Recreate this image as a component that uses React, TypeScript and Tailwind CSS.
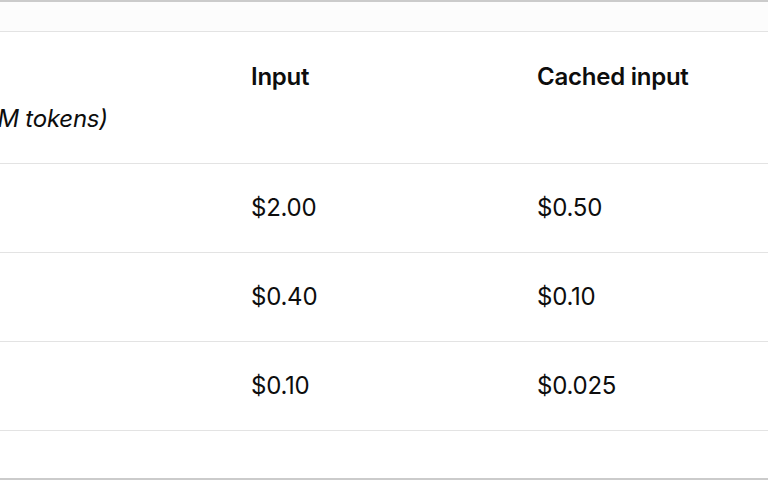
export default function App() {
  const rows = [
    { input: "$2.00", cached: "$0.50" },
    { input: "$0.40", cached: "$0.10" },
    { input: "$0.10", cached: "$0.025" },
  ];

  return (
    <div className="w-[768px] h-[480px] overflow-hidden bg-white border-y-2 border-[#cbcbcb] flex flex-col text-[#0d0d0d] font-['Inter',sans-serif]">
      <div className="h-[29px] bg-[#fcfcfc]" />
      <div className="grid grid-cols-[251px_286px_286px] border-y border-[#e3e3e3] h-[133px] text-[24px] leading-[42px] pt-[24px] tracking-[-0.01em]">
        <div className="flex flex-col">
          <span>&nbsp;</span>
          <span className="italic -ml-[64px] whitespace-nowrap">(per 1M tokens)</span>
        </div>
        <div className="font-semibold">Input</div>
        <div className="font-semibold">Cached input</div>
      </div>
      {rows.map((row, idx) => (
        <div key={idx} className="grid grid-cols-[251px_286px_286px] items-center h-[89px] border-b border-[#e3e3e3] text-[24px] tracking-[-0.01em]">
          <div />
          <div>{row.input}</div>
          <div>{row.cached}</div>
        </div>
      ))}
      <div className="flex-1" />
    </div>
  );
}
